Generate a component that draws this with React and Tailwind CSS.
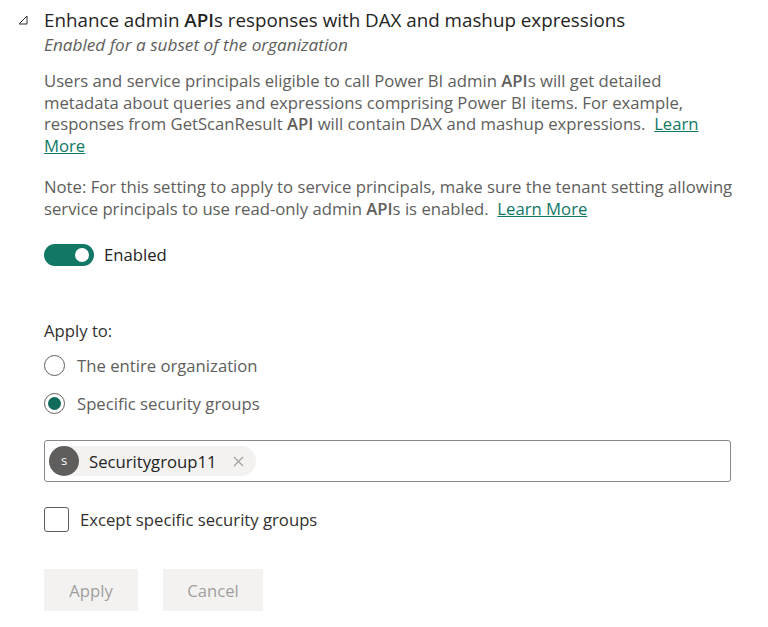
import React from "react";

const font = { fontFamily: '"Open Sans", "Noto Sans", sans-serif' };

export default function App() {
  return (
    <div className="w-[768px] h-[627px] bg-white text-[#323130] overflow-hidden" style={font}>
      <div className="flex pt-[8px]">
        <div className="w-[44px] shrink-0 flex justify-center pt-[6px] pl-[2px]">
          <svg width="10" height="10" viewBox="0 0 10 10" className="mt-[1px]">
            <path d="M9 1 L9 9 L1 9 Z" fill="none" stroke="#323130" strokeWidth="1" strokeLinejoin="miter" />
          </svg>
        </div>
        <div className="flex-1 min-w-0 pr-[37px]">
          <div className="text-[18.8px] leading-[25px] text-[#252423] whitespace-nowrap">
            Enhance admin <b className="font-semibold">API</b>s responses with DAX and mashup expressions
          </div>
          <div className="text-[17.2px] leading-[24px] italic text-[#605e5c]">
            Enabled for a subset of the organization
          </div>
          <p className="mt-[13px] text-[16.7px] leading-[21.5px] text-[#605e5c] whitespace-nowrap">
            Users and service principals eligible to call Power BI admin <b className="font-semibold">API</b>s will get detailed<br />
            metadata about queries and expressions comprising Power BI items. For example,<br />
            responses from GetScanResult <b className="font-semibold">API</b> will contain DAX and mashup expressions.&nbsp;{" "}
            <a className="text-[#117865] underline">Learn</a><br />
            <a className="text-[#117865] underline">More</a>
          </p>
          <p className="mt-[20px] text-[16.7px] leading-[21.5px] text-[#605e5c] whitespace-nowrap">
            Note: For this setting to apply to service principals, make sure the tenant setting allowing<br />
            service principals to use read-only admin <b className="font-semibold">API</b>s is enabled.&nbsp;{" "}
            <a className="text-[#117865] underline">Learn More</a>
          </p>
          <div className="mt-[23px] flex items-center gap-[10px]">
            <div className="w-[50px] h-[22px] rounded-full bg-[#117865] flex items-center justify-end pr-[5px]">
              <div className="w-[14px] h-[14px] rounded-full bg-white" />
            </div>
            <span className="text-[16.7px] text-[#252423]">Enabled</span>
          </div>
          <div className="mt-[53px] text-[16.7px] leading-[22px] text-[#323130]">Apply to:</div>
          <div className="mt-[12px] flex items-center gap-[12px] h-[22px]">
            <div className="w-[21px] h-[21px] rounded-full border border-[#605e5c] bg-white" />
            <span className="text-[16.7px] text-[#605e5c]">The entire organization</span>
          </div>
          <div className="mt-[16px] flex items-center gap-[12px] h-[22px]">
            <div className="w-[21px] h-[21px] rounded-full border border-[#605e5c] bg-white flex items-center justify-center">
              <div className="w-[13px] h-[13px] rounded-full bg-[#0f6b5a]" />
            </div>
            <span className="text-[16.7px] text-[#605e5c]">Specific security groups</span>
          </div>
          <div className="mt-[26px] h-[42px] border border-[#8a8886] rounded-[3px] flex items-center px-[4px]">
            <div className="h-[30px] rounded-full bg-[#f3f2f1] flex items-center pr-[12px]">
              <div className="w-[30px] h-[30px] rounded-full bg-[#605e5c] text-white text-[13px] flex items-center justify-center">s</div>
              <span className="ml-[10px] text-[16.7px] text-[#252423]">Securitygroup11</span>
              <span className="ml-[16px] text-[#a19f9d]">
                <svg width="11" height="11" viewBox="0 0 11 11">
                  <path d="M1 1 L10 10 M10 1 L1 10" stroke="#a19f9d" strokeWidth="1.1" />
                </svg>
              </span>
            </div>
          </div>
          <div className="mt-[25px] flex items-center gap-[11px]">
            <div className="w-[25px] h-[25px] rounded-[3px] border border-[#605e5c] bg-white" />
            <span className="text-[16.7px] text-[#323130]">Except specific security groups</span>
          </div>
          <div className="mt-[37px] flex gap-[25px]">
            <div className="w-[94px] h-[42px] bg-[#f3f2f1] flex items-center justify-center text-[16.7px] text-[#a19f9d]">Apply</div>
            <div className="w-[100px] h-[42px] bg-[#f3f2f1] flex items-center justify-center text-[16.7px] text-[#a19f9d]">Cancel</div>
          </div>
        </div>
      </div>
    </div>
  );
}
